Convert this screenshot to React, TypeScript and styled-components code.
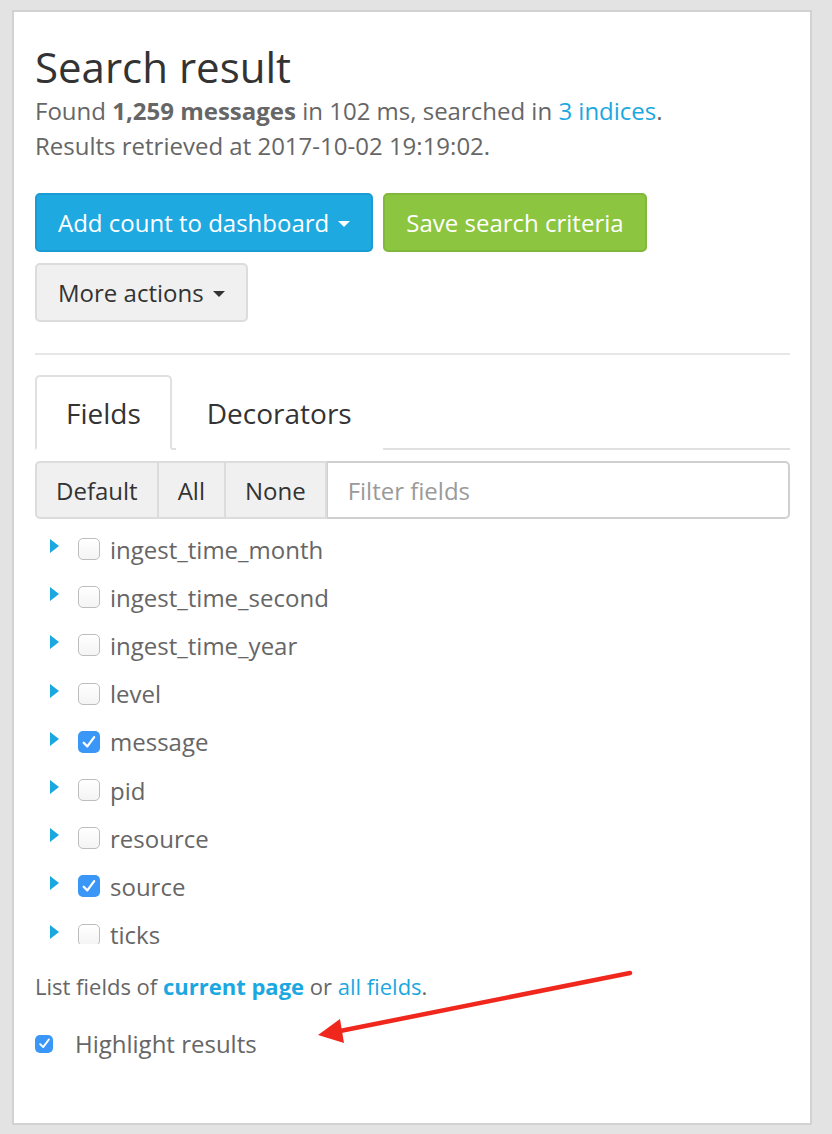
import React from 'react';
import styled, { createGlobalStyle } from 'styled-components';

const GlobalStyle = createGlobalStyle`
  html, body {
    margin: 0;
    padding: 0;
    background: #e3e3e3;
  }
  body {
    font-family: "Open Sans", "Liberation Sans", sans-serif;
    color: #666;
  }
`;

const Page = styled.div`
  padding: 10px 20px 9px 12px;
`;

const Panel = styled.div`
  position: relative;
  box-sizing: border-box;
  width: 800px;
  height: 1115px;
  background: #fff;
  border: 2px solid #d2d2d2;
  padding: 29px 20px 0 21px;
`;

const Title = styled.h1`
  margin: 0;
  font-size: 42px;
  line-height: 52px;
  font-weight: 400;
  color: #333;
`;

const Summary = styled.p`
  margin: 0;
  font-size: 24px;
  line-height: 35px;
`;

const Link = styled.span<{ $bold?: boolean }>`
  color: #1ba8e0;
  font-weight: ${(p) => (p.$bold ? 700 : 400)};
`;

const ButtonBar = styled.div`
  display: flex;
  flex-wrap: wrap;
  gap: 11px 10px;
  margin-top: 30px;
  width: 660px;
`;

const Button = styled.button<{ $variant: 'info' | 'success' | 'default' }>`
  box-sizing: border-box;
  height: 59px;
  display: inline-flex;
  align-items: center;
  gap: 9px;
  padding: 0 21px;
  font-family: inherit;
  font-size: 24px;
  border-radius: 5px;
  border: 2px solid
    ${(p) =>
      p.$variant === 'info' ? '#1b9cd4' : p.$variant === 'success' ? '#80b83b' : '#dcdcdc'};
  background: ${(p) =>
    p.$variant === 'info' ? '#1fa9e1' : p.$variant === 'success' ? '#8cc53f' : '#f0f0f0'};
  color: ${(p) => (p.$variant === 'default' ? '#333' : '#fff')};
`;

const Caret = styled.span`
  display: inline-block;
  width: 0;
  height: 0;
  border-left: 6px solid transparent;
  border-right: 6px solid transparent;
  border-top: 6px solid currentColor;
  margin-top: 2px;
`;

const Divider = styled.hr`
  margin: 31px 0 20px;
  border: 0;
  border-top: 2px solid #e6e6e6;
`;

const TabList = styled.div`
  display: flex;
  border-bottom: 2px solid #e0e0e0;
`;

const Tab = styled.div<{ $active?: boolean }>`
  box-sizing: border-box;
  height: 75px;
  margin-bottom: -2px;
  padding: 0 29px;
  display: flex;
  align-items: center;
  font-size: 28px;
  color: #333;
  border: 2px solid ${(p) => (p.$active ? '#e0e0e0' : 'transparent')};
  border-bottom-color: ${(p) => (p.$active ? '#fff' : 'transparent')};
  border-radius: 5px 5px 0 0;
  background: #fff;
  margin-right: 4px;
`;

const FilterGroup = styled.div`
  display: flex;
  height: 58px;
  margin-top: 11px;
`;

const GroupButton = styled.button<{ $first?: boolean }>`
  box-sizing: border-box;
  height: 100%;
  padding: 0 19px;
  font-family: inherit;
  font-size: 24px;
  color: #333;
  background: #f0f0f0;
  border: 2px solid #dcdcdc;
  border-left-width: ${(p) => (p.$first ? '2px' : '0')};
  border-radius: ${(p) => (p.$first ? '5px 0 0 5px' : '0')};
`;

const FilterInput = styled.input`
  box-sizing: border-box;
  flex: 1;
  min-width: 0;
  height: 100%;
  padding: 0 20px;
  font-family: inherit;
  font-size: 24px;
  color: #333;
  border: 2px solid #d0d0d0;
  border-left-width: 1px;
  border-radius: 0 5px 5px 0;
  outline: none;
  &::placeholder {
    color: #9a9a9a;
  }
`;

const FieldList = styled.div`
  margin-top: 6px;
  height: 419px;
  overflow: hidden;
`;

const FieldRow = styled.div`
  display: flex;
  align-items: center;
  height: 48.2px;
`;

const Expander = styled.span`
  width: 0;
  height: 0;
  margin-left: 15px;
  margin-right: 19px;
  margin-top: -6px;
  border-top: 7px solid transparent;
  border-bottom: 7px solid transparent;
  border-left: 9px solid #1ba8e0;
`;

const Box = styled.span<{ $checked?: boolean; $size: number }>`
  box-sizing: border-box;
  display: inline-flex;
  align-items: center;
  justify-content: center;
  width: ${(p) => p.$size}px;
  height: ${(p) => p.$size}px;
  border-radius: 5px;
  border: ${(p) => (p.$checked ? 'none' : '1.5px solid #bdbdbd')};
  background: ${(p) => (p.$checked ? '#3b97f7' : 'linear-gradient(#fff, #f4f4f4)')};
  flex-shrink: 0;
`;

const FieldName = styled.span`
  font-size: 24px;
  color: #666;
  margin-left: 10px;
`;

const Note = styled.p`
  margin: 25px 0 0;
  font-size: 22px;
  line-height: 35px;
`;

const HighlightRow = styled.label`
  display: flex;
  align-items: center;
  gap: 22px;
  margin-top: 22px;
  font-size: 24px;
  line-height: 35px;
`;

const Annotation = styled.svg`
  position: absolute;
  left: 286px;
  top: 943px;
  overflow: visible;
`;

const Check = ({ size }: { size: number }) => (
  <svg width={size * 0.72} height={size * 0.72} viewBox="0 0 12 12">
    <path d="M2 6.6 L4.8 9.4 L10 2.4" fill="none" stroke="#fff" strokeWidth="1.7" strokeLinecap="round" strokeLinejoin="round" />
  </svg>
);

const CheckBox = ({ checked, size = 22 }: { checked?: boolean; size?: number }) => (
  <Box $checked={checked} $size={size}>
    {checked && <Check size={size} />}
  </Box>
);

const fields = [
  { name: 'ingest_time_month', checked: false },
  { name: 'ingest_time_second', checked: false },
  { name: 'ingest_time_year', checked: false },
  { name: 'level', checked: false },
  { name: 'message', checked: true },
  { name: 'pid', checked: false },
  { name: 'resource', checked: false },
  { name: 'source', checked: true },
  { name: 'ticks', checked: false }
];

const App = () => {
  return (
    <Page>
      <GlobalStyle />
      <Panel>
        <Title>Search result</Title>
        <Summary>
          Found <b>1,259 messages</b> in 102 ms, searched in <Link>3 indices</Link>.
          <br />
          Results retrieved at 2017-10-02 19:19:02.
        </Summary>
        <ButtonBar>
          <Button $variant="info">
            Add count to dashboard <Caret />
          </Button>
          <Button $variant="success">Save search criteria</Button>
          <Button $variant="default">
            More actions <Caret />
          </Button>
        </ButtonBar>
        <Divider />
        <TabList>
          <Tab $active>Fields</Tab>
          <Tab>Decorators</Tab>
        </TabList>
        <FilterGroup>
          <GroupButton $first>Default</GroupButton>
          <GroupButton>All</GroupButton>
          <GroupButton>None</GroupButton>
          <FilterInput placeholder="Filter fields" />
        </FilterGroup>
        <FieldList>
          {fields.map((field) => (
            <FieldRow key={field.name}>
              <Expander />
              <CheckBox checked={field.checked} />
              <FieldName>{field.name}</FieldName>
            </FieldRow>
          ))}
        </FieldList>
        <Note>
          List fields of <Link $bold>current page</Link> or <Link>all fields</Link>.
        </Note>
        <HighlightRow>
          <CheckBox checked size={18} />
          Highlight results
        </HighlightRow>
        <Annotation width="340" height="100" viewBox="0 0 340 100">
          <line x1="330" y1="18" x2="40" y2="76" stroke="#f0271c" strokeWidth="4.5" strokeLinecap="round" />
          <polygon points="18,80 40,64 44,88" fill="#f0271c" />
        </Annotation>
      </Panel>
    </Page>
  );
};

export default App;
